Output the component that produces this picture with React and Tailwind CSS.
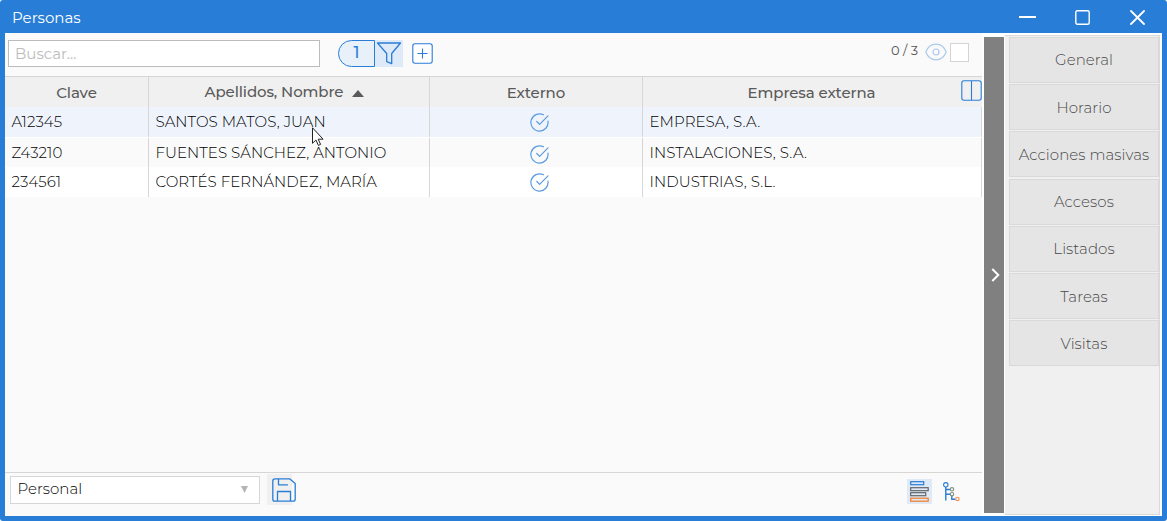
import clsx from 'clsx';

const people = [
  { clave: 'A12345', nombre: 'SANTOS MATOS, JUAN', empresa: 'EMPRESA, S.A.', row: 'bg-[#eff4fc]', text: 'pt-[1px]', icon: 'pt-[1px]' },
  { clave: 'Z43210', nombre: 'FUENTES SÁNCHEZ, ANTONIO', empresa: 'INSTALACIONES, S.A.', row: 'bg-[#fafafa] border-t border-white', text: 'pt-[1px]', icon: 'pt-[4px]' },
  { clave: '234561', nombre: 'CORTÉS FERNÁNDEZ, MARÍA', empresa: 'INDUSTRIAS, S.L.', row: 'bg-white', text: 'pt-[1px]', icon: 'pt-[1px]' },
];

const actions = [
  { label: 'General', text: 'pt-0' },
  { label: 'Horario', text: 'pt-[2px]' },
  { label: 'Acciones masivas', text: 'pt-[2px]' },
  { label: 'Accesos', text: 'pt-0', gap: 'mt-px' },
  { label: 'Listados', text: 'pt-0' },
  { label: 'Tareas', text: 'pt-[2px]' },
  { label: 'Visitas', text: 'pt-[2px]' },
];

const COLS = 'grid grid-cols-[144px_281px_213px_339px]';

function TitleBar() {
  return (
    <header className="flex h-[33px] shrink-0 items-center justify-between pl-[12px] pr-[22px] text-white">
      <h1 className="pt-[3px] text-[15px]">Personas</h1>
      <div className="flex items-center pt-[2px]">
        <svg className="mr-[39px]" width="17" height="17" viewBox="0 0 17 17" stroke="currentColor" strokeWidth="2">
          <path d="M0 8h17" />
        </svg>
        <svg className="mr-[40px]" width="15" height="15" viewBox="0 0 15 15" fill="none" stroke="currentColor" strokeWidth="1.4">
          <rect x="0.8" y="0.8" width="13.4" height="13.4" rx="1.5" />
        </svg>
        <svg width="15" height="15" viewBox="0 0 15 15" stroke="currentColor" strokeWidth="1.8" strokeLinecap="round">
          <path d="M1 1l13 13M14 1L1 14" />
        </svg>
      </div>
    </header>
  );
}

function Toolbar() {
  return (
    <div className="flex h-[43px] shrink-0 items-start pl-[3px] pt-[7px]">
      <input
        type="text"
        placeholder="Buscar..."
        className="h-[27px] w-[312px] border border-[#bcbcbc] bg-white px-[6px] pb-[1px] text-[15px] placeholder:text-[#bdbdbd]"
      />
      <div className="ml-[18px] flex h-[27px]">
        <span className="flex w-[37px] items-center justify-center rounded-l-full border border-[#287dd6] bg-[#e8f0fa] pb-[2px] text-[16px] font-medium text-[#287dd6]">1</span>
        <span className="flex w-[28px] justify-center bg-[#deeaf7] pt-[2px]">
          <svg width="26" height="24" viewBox="0 0 26 24" fill="none" stroke="#287dd6" strokeWidth="1.3" strokeLinejoin="round">
            <path d="M1.5 1h23l-8.8 10.5v10.2l-5-2v-8.2z" />
          </svg>
        </span>
      </div>
      <svg className="ml-[9px] mt-[3px]" width="21" height="21" viewBox="0 0 21 21" fill="none" stroke="#287dd6" strokeWidth="1.1">
        <rect x="0.8" y="0.8" width="19.4" height="19.4" rx="2.2" fill="#fff" />
        <path d="M5.5 10.5h10M10.5 5.5v10" />
      </svg>
      <span className="ml-auto text-[13px] leading-5 text-[#555]">0 / 3</span>
      <svg className="ml-[7px] mt-[3px]" width="22" height="18" viewBox="0 0 22 18" fill="none" stroke="#abc9ec" strokeWidth="1.2">
        <path d="M.8 9C5-1.4 17-1.4 21.2 9 17 19.4 5 19.4.8 9z" />
        <circle cx="11" cy="9" r="3" />
      </svg>
      <span className="ml-[3px] mr-[13px] mt-[3px] size-[19px] border border-[#d4d4d4] bg-white" />
    </div>
  );
}

function HeaderRow() {
  const cell = 'flex items-center justify-center pt-[2px] tracking-[-0.1px]';
  return (
    <div className={clsx(COLS, 'relative h-[31px] border-t border-[#d6d6d6] bg-[#f0f0f0] text-[15px] font-medium text-[#5a5a5a]')}>
      <div className={clsx(cell, 'border-r border-[#d6d6d6]')}>Clave</div>
      <div className={clsx(cell, 'border-r border-[#d6d6d6] pr-[9px]')}>
        <span className="pb-[1px]">Apellidos, Nombre</span>
        <svg className="ml-[9px]" width="12" height="7" viewBox="0 0 12 7" fill="#5a5a5a"><path d="M6 0l6 7H0z" /></svg>
      </div>
      <div className={clsx(cell, 'border-r border-[#d6d6d6]')}>Externo</div>
      <div className={clsx(cell, 'pr-[2px]')}>Empresa externa</div>
      <svg className="absolute right-0 top-[3px]" width="21" height="21" viewBox="0 0 21 21" fill="none" stroke="#287dd6" strokeWidth="1.1">
        <rect x="0.8" y="0.8" width="19.4" height="19.4" rx="2.2" />
        <path d="M10.5 1v19" />
      </svg>
    </div>
  );
}

function CheckIcon() {
  return (
    <svg width="19" height="19" viewBox="0 0 19 19" fill="none" stroke="#5a9ae0" strokeWidth="1.2" strokeLinecap="round" strokeLinejoin="round">
      <path d="M18 8.2a8.6 8.6 0 1 1-4.6-6.4" />
      <path d="M6.8 8.5l2.8 2.8L18 2.9" />
    </svg>
  );
}

function PersonRow({ person }) {
  const cell = 'flex items-center border-r border-[#d6d6d6] pl-[6.5px] whitespace-nowrap';
  return (
    <div className={clsx(COLS, 'h-[30px] text-[15px] font-light tracking-[0.06px] text-black', person.row)}>
      <div className={clsx(cell, person.text)}>{person.clave}</div>
      <div className={clsx(cell, person.text)}>{person.nombre}</div>
      <div className={clsx('flex items-center justify-center border-r border-[#d6d6d6] pl-[6px]', person.icon)}><CheckIcon /></div>
      <div className={clsx(cell, person.text)}>{person.empresa}</div>
    </div>
  );
}

function Footer() {
  return (
    <footer className="flex h-[44px] shrink-0 items-start border-t border-[#d6d6d6] pl-[5px]">
      <div className="mt-[3px] flex h-[28px] w-[250px] items-center justify-between border border-[#d6d6d6] bg-white pb-[1px] pl-[6.5px] pr-[11px] text-[15px] font-light text-black">
        <span>Personal</span>
        <svg width="7" height="7" viewBox="0 0 7 7" fill="#b4b4b4"><path d="M0 0h7L3.5 7z" /></svg>
      </div>
      <button className="ml-[7px] mt-[1px] h-[31px] w-[25px] bg-[#f0f0f0] pl-[5px]">
        <svg className="max-w-none" width="24" height="24" viewBox="0 0 24 24" fill="none" stroke="#287dd6" strokeWidth="1.3" strokeLinejoin="round">
          <path d="M3 .8h14.6l5.6 4.8V21a2.2 2.2 0 0 1-2.2 2.2H3A2.2 2.2 0 0 1 .8 21V3A2.2 2.2 0 0 1 3 .8z" />
          <path d="M6.5 1v5.8h9.4M5.5 23v-9.5h13V23" />
        </svg>
      </button>
      <div className="ml-auto mr-[22px] mt-[6px] flex">
        <span className="flex size-[25px] items-center justify-center bg-[#deeaf7]">
          <svg width="19" height="21" viewBox="0 0 19 21" fill="none" strokeWidth="1.2">
            <rect x=".7" y=".7" width="13" height="3" stroke="#287dd6" />
            <rect x=".7" y="6.7" width="17.5" height="3" stroke="#666" />
            <rect x=".7" y="11.7" width="15" height="3" stroke="#666" />
            <rect x=".7" y="17.2" width="17.5" height="3" stroke="#f47a20" />
          </svg>
        </span>
        <svg className="ml-[11px] mt-[3px]" width="17" height="20" viewBox="0 0 17 20" fill="none" strokeWidth="1.1">
          <path d="M2.8 5v13.5M3 7.5h4M3 12.2h4M8.8 13.5v3.7h3.7" stroke="#287dd6" strokeWidth="1.4" />
          <circle cx="2.8" cy="2.8" r="2.2" stroke="#287dd6" />
          <circle cx="9" cy="7.3" r="1.7" stroke="#829082" />
          <circle cx="9" cy="12.2" r="1.7" stroke="#829082" />
          <circle cx="14.4" cy="17" r="1.7" stroke="#f58b4c" />
        </svg>
      </div>
    </footer>
  );
}

function SidePanel() {
  return (
    <aside className="flex w-[180px] shrink-0 bg-white pl-[2px] pr-[2px]">
      <div className="mb-[3px] mt-[4px] flex w-[20px] items-center justify-center bg-[#808080]">
        <svg className="ml-[2px]" width="9" height="14" viewBox="0 0 9 14" fill="none" stroke="#fff" strokeWidth="2">
          <path d="M1.3 1l6 6-6 6" />
        </svg>
      </div>
      <nav className="mb-[1px] ml-[1px] mt-[2px] flex grow flex-col gap-px border-y border-r border-[#d9d9d9] bg-[#f0f0f0] pl-[4px] pt-[1px]">
        {actions.map((a) => (
          <button
            key={a.label}
            className={clsx('h-[46px] border border-[#d9d9d9] bg-[#e5e5e5] text-[15px] font-light tracking-[0.06px] text-[#484848]', a.text, a.gap)}
          >
            {a.label}
          </button>
        ))}
      </nav>
    </aside>
  );
}

function Pointer() {
  return (
    <svg className="absolute left-[312px] top-[127px]" width="12" height="19" viewBox="0 0 12 19" fill="#fff" stroke="#222" strokeWidth="1">
      <path d="M.5.8v15.5l3.4-3.3 2.5 5.4 2.2-1-2.4-5.2h4.9z" />
    </svg>
  );
}

export default function App() {
  return (
    <div className="relative flex h-[521px] w-[1167px] flex-col overflow-hidden rounded-[3px] bg-[#287dd6] font-[Montserrat,Inter,sans-serif]">
      <TitleBar />
      <div className="mx-[5px] mb-[5px] flex min-h-0 grow">
        <main className="flex grow flex-col bg-[#fafafa]">
          <Toolbar />
          <HeaderRow />
          {people.map((p) => <PersonRow key={p.clave} person={p} />)}
          <div className="grow" />
          <Footer />
        </main>
        <SidePanel />
      </div>
      <Pointer />
    </div>
  );
}
